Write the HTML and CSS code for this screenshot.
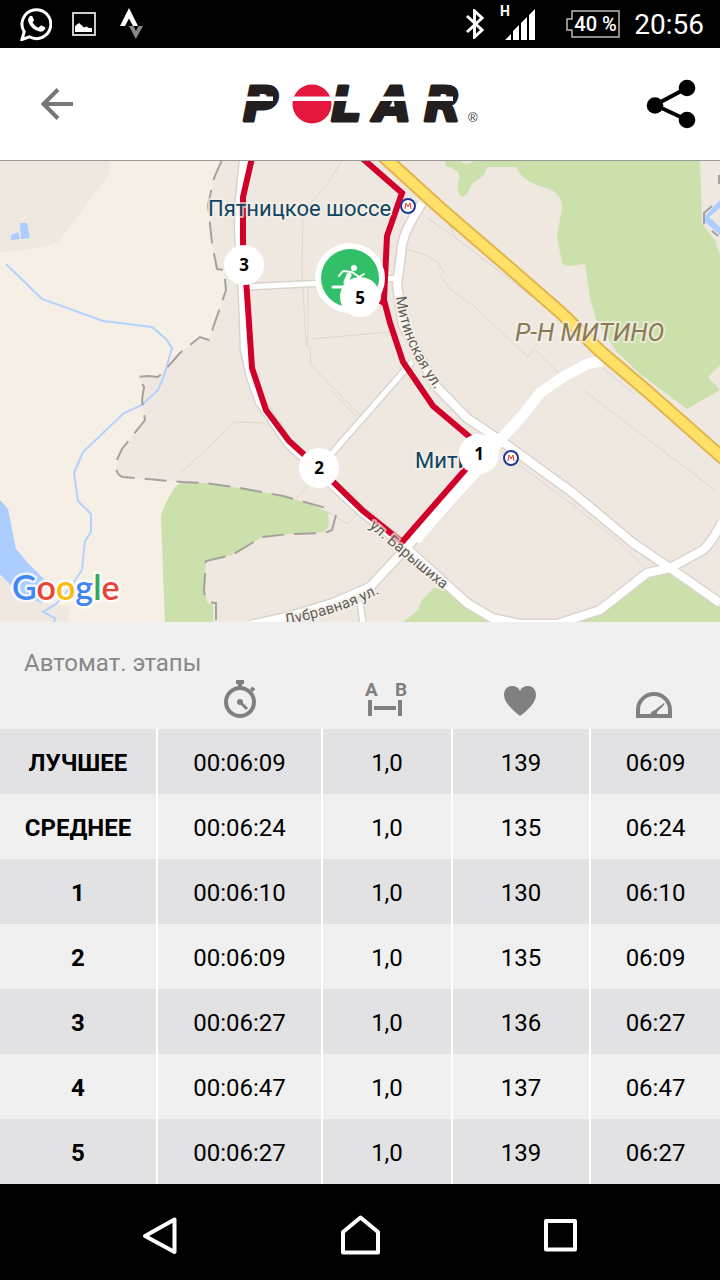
FILE: index.html
```html
<!DOCTYPE html>
<html lang="ru">
<head>
<meta charset="utf-8">
<meta name="viewport" content="width=device-width, initial-scale=1">
<title>Polar – Автомат. этапы</title>
<link rel="stylesheet" href="styles.css">
</head>
<body>
<div class="status">
  <svg class="status-chat" width="32" height="34" viewBox="0 0 32 34" aria-hidden="true">
    <path d="M2 32.500L4.200 24.800A14.400 14.400 0 1 1 9.500 29.800Z" fill="none" stroke="#fff" stroke-width="3"/>
    <path d="M9.500 9.500q1.800-1.500 3 0l1.400 3.300q.3 1-1.400 2.700 2.300 4 6 5.300l2-2.100q.6-.5 1.300-.1l3.200 1.600q.7.500.1 1.900-1.700 3.300-5.600 2.500Q11 22.500 8.300 14.800q-.9-3.300 1.200-5.300z" fill="#fff"/>
  </svg>
  <svg width="24" height="24" viewBox="0 0 24 24" aria-hidden="true">
    <path d="M1 1H23V23H1Z" fill="none" stroke="#ccc" stroke-width="2"/>
    <path d="M3 20V14l4-3 5 4.500 2.500-1L17 16h3v4z" fill="#fff"/>
  </svg>
  <svg width="24" height="32" viewBox="0 0 24 32" aria-hidden="true">
    <path d="M9 0L18 18H13L9 10.500 5 18H0Z" fill="#fff"/>
    <path d="M9 18h4.500l2.500 5 2.500-5H23l-7.200 13z" fill="#888"/>
  </svg>
  <div class="status-right">
    <svg width="18" height="30" viewBox="0 0 18 30" aria-hidden="true">
      <path d="M1 7l15 14-7.500 7V2L16 9 1 23" fill="none" stroke="#fff" stroke-width="3"/>
    </svg>
    <svg width="38" height="48" viewBox="0 -5 38 48" aria-label="H">
      <text class="net" x="0" y="11">H</text>
      <path d="M5 35l6-6v6zM13 35V26l6-6v15zM21 35V18l6-6v23zM29 35V10l6-6v31z" fill="#fff"/>
    </svg>
    <div class="battery">
      <svg viewBox="0 0 54 28" width="54" height="28" aria-hidden="true"><path d="M6 1H53V27H6V20H1V9H6Z" fill="none" stroke="#bbb" stroke-width="1.500"/></svg>
      <span>40 %</span>
    </div>
    <time>20:56</time>
  </div>
</div>

<header class="appbar">
  <button class="icon-button back" aria-label="Назад">
    <svg width="34" height="34" viewBox="0 0 34 34"><path d="M18 2.500L3.500 17 18 31.500M3 17H33" fill="none" stroke="#777" stroke-width="4"/></svg>
  </button>
  <svg class="logo" width="240" height="64" viewBox="0 -10 240 64" role="img" aria-label="Polar">
    <g class="logo-text"><text x="3" y="39">P</text><text x="91" y="39">L</text><text x="134" y="39">A</text><text x="184" y="39">R</text></g>
    <circle cx="72" cy="22" r="19.500" fill="#e3173e"/>
    <path d="M0 14.500H33V19H0zM50 14.500H213V19H50z" fill="#fff"/>
    <text class="reg" x="228" y="40">®</text>
  </svg>
  <button class="icon-button" aria-label="Поделиться">
    <svg width="50" height="50" viewBox="0 0 50 50"><path d="M41 9L9 26 41 41" fill="none" stroke="#000" stroke-width="4"/><circle cx="41" cy="9" r="8.300"/><circle cx="9" cy="26.500" r="8.300"/><circle cx="41" cy="41" r="8.300"/></svg>
  </button>
</header>

<main>
<svg class="map" viewBox="0 161 720 461" role="img" aria-label="Карта маршрута">
  <defs>
    <path id="mitinskaya" d="M396 297Q402 350 445 402"/>
    <path id="baryshiha" d="M369 527Q402 556 456 600"/>
    <path id="dubravnaya" d="M285 625Q350 612 390 587"/>
  </defs>
  <rect y="160" width="720" height="463" fill="#efe8e0"/>
  <path class="field" d="M110 160V173L60 240Q55 247 0 252V574L45 603 70 607 68 623H165L161 516 175 487 182 482 121 477 116 468 122 449 145 420 142 400 144 387 138 377 148 376 158 377 165 370 180 353 200 337 209 340 213 328 226 290 224 270 217 269 212 243 208 205 214 178 222 160Z"/>
  <g class="water">
    <path d="M0 500L8 509 16 549 28 563 45 580 42 603 20 595 0 574ZM11 235L18 232 20 239 11 240ZM20 223H27L30 238 21 239Z"/>
    <path d="M720 200L704 217 705 222 720 235V227L709 217 720 208Z"/>
  </g>
  <path class="stream" d="M6 264L42 299 103 321 152 327 166 339 172 348 164 376 158 390 142 405 124 413 83 452 74 473 78 501 91 514V532L85 541 82 570 70 588 56 604 43 612 55 618 54 624"/>
  <g class="park">
    <path d="M182 482L205 483 240 488 283 496 315 506 328 512 329 525 325 532 290 534 262 537 232 555 206 561 204 590 207 602 213 605V623H165L161 516Q162 508 175 487Z"/>
    <path d="M445 160L446 166Q464 171 458 182L458 192Q462 200 467 194L472 184 483 176 488 167H516Q522 180 537 185L552 190Q562 196 562 208L557 237 562 262Q563 266 570 266L585 264 590 298 597 322 617 352 640 374 687 409 720 390 708 377 720 365V255L715 240 702 224 700 160H475Q466 168 460 160Z"/>
    <path d="M555 623L600 612 650 576 670 571 720 607V623ZM402 623L418 610 422 600 434 588 445 590 500 620V623Z"/>
  </g>
  <g class="minor">
    <path d="M342 160L328 183 303 212 302 270 306 345 310 348 311 365 360 415M308 288V347M311 339L390 332M181 473L235 422 265 423M330 389L356 416M405 248L425 255 438 262 444 273M427 218L456 238 586 338M440 275L450 289 475 307 528 357 545 332M535 350L559 373M603 368L635 395M502 452L570 503 617 540 647 570M573 509L577 502M440 205L457 240M295 500L310 483M335 485L355 495M328 512L348 524 362 506M583 390L715 490"/>
  </g>
  <g class="case">
    <path d="M422 203L413 218Q401 238 401 255L397 285 403 325 435 385 467 418 500 440 573 493 633 543 670 568 720 603"/>
    <path d="M602 361L587 364 563 377 540 393 523 415 500 440 480 467 440 513 407 547 370 587 333 603 287 617 250 625"/>
    <path d="M245 150L240 200 239 230 243 293 245 350 251 377 260 402 288 443 319 472 362 512 402 544 445 583 467 603 492 618 520 624H557L600 610 647 573 670 568 703 550 Q712 542 722 522"/>
    <path class="narrow" d="M245 287L345 282 400 278M319 468L412 362M360 602L363 624"/>
  </g>
  <g class="road">
    <path d="M422 203L413 218Q401 238 401 255L397 285 403 325 435 385 467 418 500 440 573 493 633 543 670 568 720 603"/>
    <path d="M602 361L587 364 563 377 540 393 523 415 500 440 480 467 440 513 407 547 370 587 333 603 287 617 250 625"/>
    <path class="wide" d="M602 361L587 364 563 377 540 393 523 415 500 440 480 467 415 540"/>
    <path d="M245 150L240 200 239 230 243 293 245 350 251 377 260 402 288 443 319 472 362 512 402 544 445 583 467 603 492 618 520 624H557L600 610 647 573 670 568 703 550 Q712 542 722 522"/>
    <path class="narrow" d="M245 287L345 282 400 278M319 468L412 362M360 602L363 624"/>
  </g>
  <path class="highway-case" d="M383 156L440 208 505 264 560 312 600 351 647 391 724 459"/>
  <path class="highway" d="M383 156L440 208 505 264 560 312 600 351 647 391 724 459"/>
  <g class="border">
    <path d="M222 160L214 178 208 205 212 243 217 269 224 270 226 290 213 328 209 340 200 337 180 353 165 370 158 377 148 376 138 377 144 387 142 400 145 420 122 449 116 462Q115 475 123 477L182 482 205 483 240 488 283 496 326 508"/>
    <path d="M336 515L332 530 325 533 290 534 262 537 232 555 206 561 204 590Q205 603 216 603V623"/>
    <path d="M712 206L704 213V224L718 236M719 175V184"/>
  </g>
  <g class="route">
    <path d="M252 158L243 197 243 243 247 293 252 368 266 410 289 441 319 468 362 510 402 542 478 455"/>
    <path d="M362 158L402 193 387 236 384 300 390 323 403 362 433 406 478 444"/>
    <path class="arrow" d="M380 303L386 292V306Z"/>
  </g>
  <g class="map-text">
    <text class="station" x="208" y="216">Пятницкое шоссе</text>
    <text class="station" x="415" y="468">Митино</text>
    <text class="district" x="515" y="341">Р-Н МИТИНО</text>
    <text class="street"><textPath href="#mitinskaya">Митинская ул.</textPath></text>
    <text class="street"><textPath href="#baryshiha">ул. Барышиха</textPath></text>
    <text class="street"><textPath href="#dubravnaya">Дубравная ул.</textPath></text>
  </g>
  <g class="metro">
    <circle cx="408" cy="206" r="7"/><circle cx="511" cy="458" r="7"/>
    <path d="M405 209L406 203 408 207 410 203 411 209M508 461L509 455 511 459 513 455 514 461"/>
  </g>
  <circle cx="350" cy="278" r="35" fill="#fff"/>
  <circle cx="350" cy="278" r="29" fill="#31c069"/>
  <g fill="none" stroke="#fff" stroke-linecap="round" stroke-linejoin="round">
    <path d="M339 276L343 271 352 272 359 277 364 274" stroke-width="2"/>
    <path d="M349 275L346 282 356 285" stroke-width="5"/>
    <path d="M347 284L343 287H333" stroke-width="3"/>
    <circle cx="354" cy="268" r="2" stroke-width="2" fill="#fff"/>
  </g>
  <g class="pin">
    <circle cx="244" cy="265" r="20"/><circle cx="319" cy="468" r="20"/><circle cx="479" cy="454" r="20"/><circle cx="360" cy="297" r="20"/>
    <text x="244" y="271">3</text><text x="319" y="474">2</text><text x="479" y="460">1</text><text x="360" y="304">5</text>
  </g>
  <text class="google" x="12" y="600"><tspan fill="#4285f4">G</tspan><tspan fill="#ea4335">o</tspan><tspan fill="#fbbc05">o</tspan><tspan fill="#4285f4">g</tspan><tspan fill="#34a853">l</tspan><tspan fill="#ea4335">e</tspan></text>
</svg>

<table class="laps">
  <caption>Автомат. этапы</caption>
  <colgroup><col class="c-name"><col class="c-time"><col class="c-dist"><col class="c-pulse"><col class="c-pace"></colgroup>
  <thead>
    <tr>
      <td></td>
      <th scope="col" aria-label="Время"><svg width="36" height="53" viewBox="0 0 36 53"><circle cx="18" cy="26" r="14" fill="none" stroke="#808080" stroke-width="4"/><path d="M14 4H22V8H20V12H16V8H14ZM28 13l2.500-2.500 2.800 2.800L30.500 16Z" fill="#808080"/><circle cx="18" cy="26" r="3" fill="#808080"/><path d="M18 26l7 7" stroke="#808080" stroke-width="3"/></svg></th>
      <th scope="col" aria-label="Расстояние"><svg width="42" height="53" viewBox="0 0 42 53"><text class="ab" x="0" y="20">A</text><text class="ab" x="30" y="20">B</text><path d="M3 24h4v16H3zM33 24h4v16h-4zM9 30h22v4H9z" fill="#808080"/></svg></th>
      <th scope="col" aria-label="Пульс"><svg width="34" height="53" viewBox="0 0 34 53"><path d="M17 40C9 34 1 26 1 19 1 13 5 10 9 10c4 0 7 2 8 5 1-3 4-5 8-5 4 0 8 3 8 9 0 7-8 15-16 21z" fill="#808080"/></svg></th>
      <th scope="col" aria-label="Темп"><svg width="38" height="53" viewBox="0 0 38 53"><path d="M3 40V34a16 16 0 0 1 32 0V40Z" fill="none" stroke="#808080" stroke-width="4"/><path d="M15 39q1-4 5-5l9-7q1 0 0 2l-7 7v3z" fill="#808080"/></svg></th>
    </tr>
  </thead>
  <tbody>
    <tr><th scope="row">ЛУЧШЕЕ</th><td>00:06:09</td><td>1,0</td><td>139</td><td>06:09</td></tr>
    <tr><th scope="row">СРЕДНЕЕ</th><td>00:06:24</td><td>1,0</td><td>135</td><td>06:24</td></tr>
    <tr><th scope="row">1</th><td>00:06:10</td><td>1,0</td><td>130</td><td>06:10</td></tr>
    <tr><th scope="row">2</th><td>00:06:09</td><td>1,0</td><td>135</td><td>06:09</td></tr>
    <tr><th scope="row">3</th><td>00:06:27</td><td>1,0</td><td>136</td><td>06:27</td></tr>
    <tr><th scope="row">4</th><td>00:06:47</td><td>1,0</td><td>137</td><td>06:47</td></tr>
    <tr><th scope="row">5</th><td>00:06:27</td><td>1,0</td><td>139</td><td>06:27</td></tr>
  </tbody>
</table>
</main>

<nav class="navbar">
  <button aria-label="Назад"><svg width="40" height="44" viewBox="0 0 40 44"><path d="M34.500 5.500V38L5 22Z"/></svg></button>
  <button aria-label="Домой"><svg width="40" height="44" viewBox="0 0 40 44"><path d="M3 38.500V18L20.500 3.500 38 18V38.500Z"/></svg></button>
  <button aria-label="Недавние"><svg width="40" height="44" viewBox="0 0 40 44"><path d="M6 7H35V35.500H6Z"/></svg></button>
</nav>
</body>
</html>
```
FILE: styles.css
```css
* { box-sizing: border-box; }
body {
  margin: 0;
  min-height: 100vh;
  display: flex;
  flex-direction: column;
  background: #f0f0f0;
  font-family: Roboto, "Noto Sans", sans-serif;
}
svg { display: block; }
button { border: 0; padding: 0; background: none; cursor: pointer; }
main { flex: 1; }

.status {
  height: 48px;
  padding: 0 16px 0 20px;
  display: flex;
  align-items: center;
  gap: 24px;
  background: #000;
  color: #fff;
}
.status-chat { margin-right: -4px; }
.status-right { margin-left: auto; display: flex; align-items: center; gap: 16px; }
.status-right time { font-size: 28px; line-height: 48px; margin-left: -2px; padding-top: 2px; }
.net { font: 700 14px Roboto, sans-serif; fill: #fff; }
.battery { display: grid; margin-left: 12px; align-items: center; }
.battery > * { grid-area: 1 / 1; }
.battery span { font-size: 20px; font-weight: 500; line-height: 24px; padding-left: 8px; }

.appbar {
  height: 113px;
  padding: 0 24px;
  display: grid;
  grid-template-columns: 50px 1fr 50px;
  align-items: center;
  justify-items: center;
  background: #fff;
  border-bottom: 1px solid #999;
}
.back { justify-self: end; }
.logo-text {
  font: italic 700 48px "DejaVu Sans", sans-serif;
  fill: #231f20;
  stroke: #231f20;
  stroke-width: 3px;
  stroke-linejoin: round;
}
.reg { font: 13px "Liberation Sans", sans-serif; fill: #333; }

.map { width: 100%; height: auto; }
.field { fill: #f6efe6; }
.water { fill: #abcdff; }
.stream { fill: none; stroke: #b3d1ff; stroke-width: 2; }
.park { fill: #cce0ab; }
.minor { fill: none; stroke: #dcd7cf; stroke-width: 1; }
.case, .road { fill: none; stroke-linejoin: round; }
.case { stroke: #d8d4cd; stroke-width: 11; }
.road { stroke: #fff; stroke-width: 8; }
.road .wide { stroke-width: 11; }
.case .narrow { stroke-width: 8; }
.road .narrow { stroke-width: 5; }
.highway-case { fill: none; stroke: #e3b44b; stroke-width: 14; }
.highway { fill: none; stroke: #ffe168; stroke-width: 10; }
.border { fill: none; stroke: #a5a19c; stroke-width: 2; stroke-dasharray: 22 10; }
.route { fill: none; stroke: #d1002b; stroke-width: 6; }
.route .arrow { stroke-width: 2; fill: #d1002b; }
.map-text { paint-order: stroke; stroke: rgba(245, 240, 234, 0.7); stroke-width: 4px; stroke-linejoin: round; }
.station { font-size: 22px; fill: #0f4560; }
.district { font-size: 25px; font-style: italic; fill: #8a7a56; }
.street { font-size: 15px; fill: #5f5c57; }
.metro { fill: #fff; stroke: #203a94; stroke-width: 2; }
.metro path { fill: none; stroke: #e5322b; stroke-width: 1; }
.pin { fill: #fff; text-anchor: middle; font: 700 17px "Noto Sans", sans-serif; }
.pin text { fill: #000; }
.google {
  font: 600 34px Lato, sans-serif;
  paint-order: stroke;
  stroke: rgba(255, 255, 255, 0.8);
  stroke-width: 5px;
  stroke-linejoin: round;
}

.laps { width: 100%; table-layout: fixed; border-collapse: separate; border-spacing: 0; }
.laps caption { height: 54px; padding: 29px 24px 0; text-align: left; font-size: 24px; line-height: 25px; color: #888; }
.c-name { width: 21.94%; }
.c-time { width: 22.92%; }
.c-dist { width: 18.06%; }
.c-pulse { width: 19.17%; }
.c-pace { width: 17.91%; }
.laps th, .laps td { padding: 0; text-align: center; }
.laps thead th, .laps thead td { height: 53px; padding-right: 4px; }
.laps thead th:nth-child(2) { padding-right: 0; }
.laps thead svg { margin: 0 auto; }
.ab { font: 700 19px Roboto, sans-serif; fill: #808080; }
.laps tbody th, .laps tbody td { height: 65px; padding-top: 2px; font-size: 24px; line-height: 28px; border-right: 2px solid #fff; color: #000; }
.laps tbody tr > :last-child { border-right: 0; }
.laps tbody tr:nth-child(odd) { background: #e2e2e4; }

.navbar {
  height: 96px;
  padding: 8px 60px 0;
  display: grid;
  grid-template-columns: repeat(3, 1fr);
  place-items: center;
  background: #000;
}
.navbar path { fill: none; stroke: #fff; stroke-width: 4; stroke-linejoin: round; }
```
